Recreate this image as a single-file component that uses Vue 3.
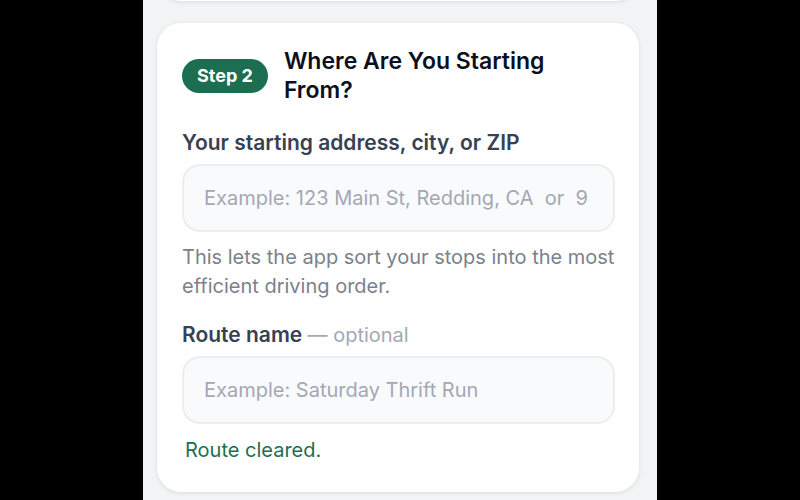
<template>
  <div class="page">
    <main class="column">
      <div class="card card-previous"></div>

      <form class="card" @submit.prevent>
        <header class="card-header">
          <span class="step-badge">Step 2</span>
          <h2 class="card-title">Where Are You Starting<br />From?</h2>
        </header>

        <div class="field">
          <label class="field-label" for="start">Your starting address, city, or ZIP</label>
          <input
            id="start"
            v-model="startAddress"
            class="field-input"
            type="text"
            :placeholder="startPlaceholder"
          />
          <p class="field-hint">This lets the app sort your stops into the most efficient driving order.</p>
        </div>

        <div class="field">
          <label class="field-label" for="route-name">
            Route name <span class="optional">— optional</span>
          </label>
          <input
            id="route-name"
            v-model="routeName"
            class="field-input"
            type="text"
            placeholder="Example: Saturday Thrift Run"
          />
        </div>

        <p class="status" role="status">{{ status }}</p>
      </form>
    </main>
  </div>
</template>

<script setup>
import { ref } from 'vue'

const startAddress = ref('')
const routeName = ref('')
const status = ref('Route cleared.')

// non-breaking spaces keep the wide gap around "or"
const startPlaceholder = 'Example: 123 Main St, Redding, CA \u00a0or \u00a09'
</script>

<style>
body {
  margin: 0;
  background: #000;
}
</style>

<style scoped>
.page {
  display: flex;
  justify-content: center;
  min-height: 100vh;
  overflow: hidden;
  font-family: Inter, "Liberation Sans", sans-serif;
}

.column {
  box-sizing: border-box;
  width: 100%;
  max-width: 514px;
  padding: 0 18px 0 14px;
  background: #f2f3f5;
}

.card {
  padding: 24px 24px 28px 25px;
  border-radius: 24px;
  background: #fff;
  box-shadow: 0 1px 4px rgba(15, 23, 42, 0.1);
}

.card-previous {
  margin: -51px 0 22px;
}

.card-header {
  display: flex;
  align-items: center;
  gap: 16px;
  margin-bottom: 24px;
}

.step-badge {
  flex: none;
  padding: 0 15px;
  border-radius: 17px;
  background: #1b6f50;
  color: #fff;
  font-size: 18px;
  font-weight: 700;
  line-height: 34px;
}

.card-title {
  margin: 0;
  color: #0b1020;
  font-size: 23px;
  font-weight: 600;
  line-height: 29px;
}

.field {
  margin-bottom: 12px;
}

.field + .field {
  margin-top: 20px;
}

.field-label {
  display: block;
  margin-bottom: 7px;
  color: #374151;
  font-size: 21px;
  font-weight: 600;
  line-height: 28px;
}

.optional {
  color: #a3a8b4;
  font-size: 20px;
  font-weight: 400;
}

.field-input {
  display: block;
  box-sizing: border-box;
  width: 100%;
  height: 68px;
  padding: 0 20px;
  border: 2px solid #ebedef;
  border-radius: 18px;
  background: #f9fafb;
  color: #0f172a;
  font-family: inherit;
  font-size: 20px;
}

.field-input::placeholder {
  color: #a3a8b4;
  opacity: 1;
}

.field-hint {
  margin: 11px 0 0;
  color: #7b818c;
  font-size: 20px;
  line-height: 29px;
}

.status {
  margin: 0;
  padding: 0 3px;
  color: #1b6f50;
  font-size: 20px;
  line-height: 28px;
}
</style>
